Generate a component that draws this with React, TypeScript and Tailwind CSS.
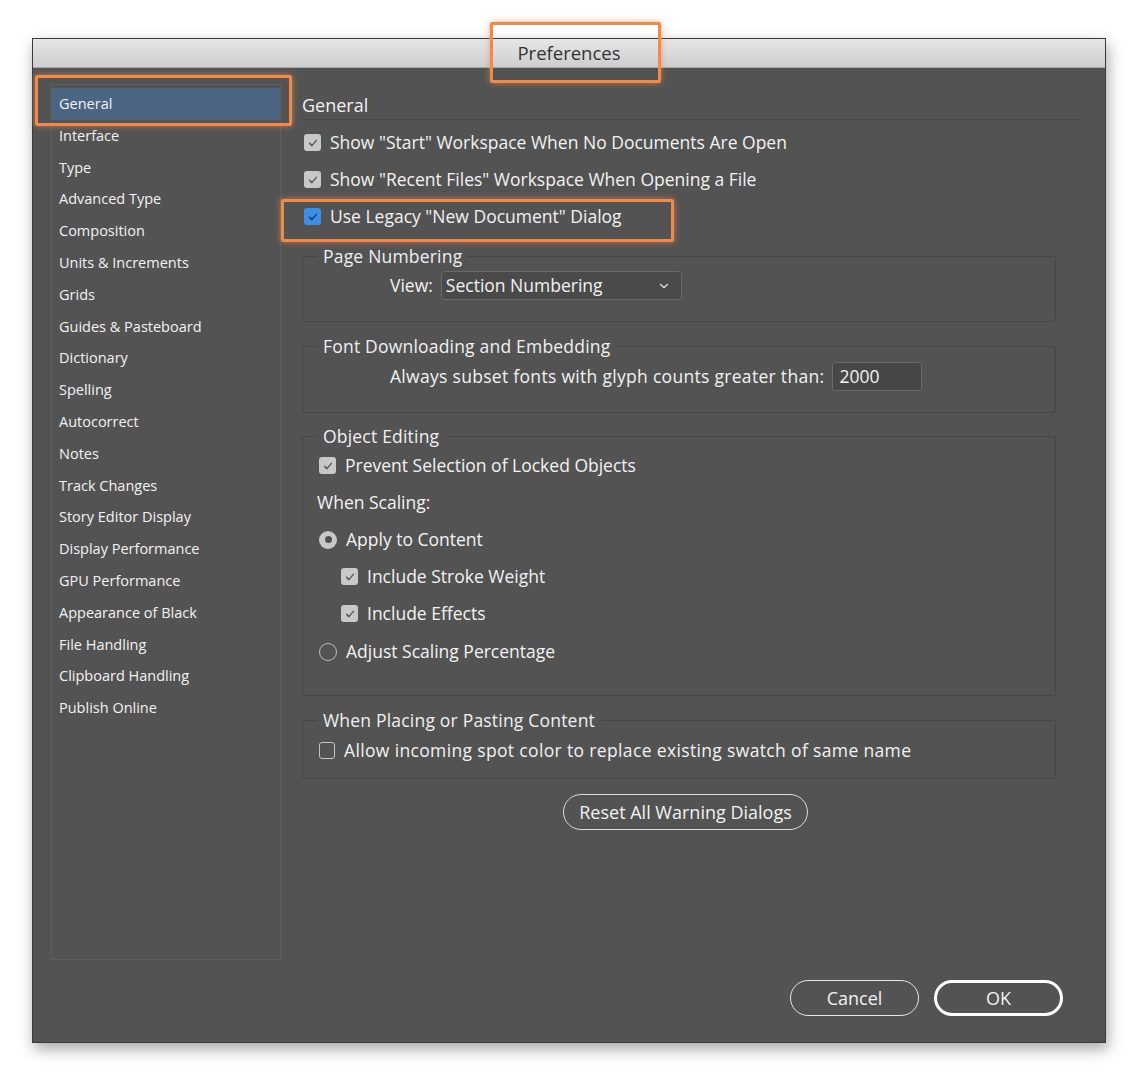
import React from "react";
import { ChevronDown } from "lucide-react";

const sections = [
  "General",
  "Interface",
  "Type",
  "Advanced Type",
  "Composition",
  "Units & Increments",
  "Grids",
  "Guides & Pasteboard",
  "Dictionary",
  "Spelling",
  "Autocorrect",
  "Notes",
  "Track Changes",
  "Story Editor Display",
  "Display Performance",
  "GPU Performance",
  "Appearance of Black",
  "File Handling",
  "Clipboard Handling",
  "Publish Online",
];

const CheckMark: React.FC<{ color: string }> = ({ color }) => (
  <svg viewBox="0 0 16 16" className="h-[12px] w-[12px]">
    <path d="M3.5 8.5l3 3 6-7" fill="none" stroke={color} strokeWidth="2" strokeLinecap="round" strokeLinejoin="round" />
  </svg>
);

const Checkbox: React.FC<{ state: "on" | "off" | "blue" }> = ({ state }) => {
  if (state === "off") {
    return <span className="h-[17px] w-[16px] shrink-0 rounded-[3px] border border-[#c4c4c4]" />;
  }
  return (
    <span
      className={`flex h-[17px] w-[17px] shrink-0 items-center justify-center rounded-[3px] ${
        state === "blue" ? "bg-[#3d8eea]" : "bg-[#c8c8c8]"
      }`}
    >
      <CheckMark color={state === "blue" ? "#1c3b63" : "#5a5a5a"} />
    </span>
  );
};

const Radio: React.FC<{ checked: boolean }> = ({ checked }) =>
  checked ? (
    <span className="flex h-[18px] w-[18px] shrink-0 items-center justify-center rounded-full bg-[#c8c8c8]">
      <span className="h-[7px] w-[7px] rounded-full bg-[#505050]" />
    </span>
  ) : (
    <span className="h-[18px] w-[18px] shrink-0 rounded-full border-[1.5px] border-[#bdbdbd]" />
  );

const Group: React.FC<{ title: string; className?: string; children: React.ReactNode }> = ({
  title,
  className = "",
  children,
}) => (
  <fieldset className={`w-[754px] rounded-[3px] border border-[#464646] ${className}`}>
    <legend className="ml-[14px] px-[6px] leading-[22px] tracking-[0.2px] text-[#f0f0f0]">{title}</legend>
    {children}
  </fieldset>
);

const PillButton: React.FC<{ label: string; className?: string }> = ({ label, className = "" }) => (
  <button className={`h-[36px] rounded-full text-[18px] font-medium text-[#f2f2f2] ${className}`}>{label}</button>
);

const Annotation: React.FC<{ className: string }> = ({ className }) => (
  <div
    className={`pointer-events-none absolute rounded-[2px] border-[3px] border-[#ef8a4c] shadow-[0_0_6px_rgba(239,138,76,0.7)] ${className}`}
  />
);

export default function App() {
  return (
    <div className="relative min-h-[1080px] w-[1138px] overflow-hidden bg-white pt-[38px] pl-[32px] font-['Open_Sans',sans-serif]">
      <div className="w-[1074px] border border-[#3a3a3a] shadow-[2px_6px_14px_rgba(0,0,0,0.35)]">
        {/* title bar */}
        <div className="flex h-[29px] items-center justify-center border-b border-[#a8a8a8] bg-gradient-to-b from-[#e7e6e7] to-[#cfcecf]">
          <span className="text-[18.5px] text-[#333]">Preferences</span>
        </div>

        {/* body */}
        <div className="flex h-[974px] flex-col bg-[#535353] pt-[16px]">
          <div className="flex">
            <ul className="ml-[18px] h-[876px] w-[230px] border border-[#5f5f5f] pt-[3px]">
              {sections.map((s, i) => (
                <li
                  key={s}
                  className={`flex h-[31.8px] items-center pl-[7px] text-[14.5px] font-medium text-[#f2f2f2] ${
                    i === 0 ? "bg-[#4a6482]" : ""
                  }`}
                >
                  {s}
                </li>
              ))}
            </ul>

            <div className="ml-[21px] mt-[9px] w-[778px] text-[17.5px] font-medium text-[#f2f2f2]">
              <div className="h-[27px] border-b border-[#474747] text-[18px] leading-[24px]">General</div>

              <div className="mt-[4px]">
                {[
                  { label: 'Show "Start" Workspace When No Documents Are Open', state: "on" as const },
                  { label: 'Show "Recent Files" Workspace When Opening a File', state: "on" as const },
                  { label: 'Use Legacy "New Document" Dialog', state: "blue" as const },
                ].map((r) => (
                  <div key={r.label} className="flex h-[37px] items-center gap-[9px] pl-[2px]">
                    <Checkbox state={r.state} />
                    <span>{r.label}</span>
                  </div>
                ))}
              </div>

              <Group title="Page Numbering" className="mt-[10px] pb-[21px]">
                <div className="flex items-center gap-[8px] pl-[87px] pt-[4px]">
                  <span>View:</span>
                  <div className="flex h-[29px] w-[241px] items-center justify-between rounded-[4px] border border-[#6a6a6a] bg-[#4a4a4a] pl-[4px] pr-[10px]">
                    <span>Section Numbering</span>
                    <ChevronDown size={14} strokeWidth={2} className="text-[#e0e0e0]" />
                  </div>
                </div>
              </Group>

              <Group title="Font Downloading and Embedding" className="mt-[13px] pb-[21px]">
                <div className="flex items-center gap-[8px] pl-[87px] pt-[5px]">
                  <span className="tracking-[0.3px]">Always subset fonts with glyph counts greater than:</span>
                  <div className="flex h-[29px] w-[90px] items-center rounded-[3px] border border-[#6a6a6a] bg-[#474747] pl-[6px]">
                    2000
                  </div>
                </div>
              </Group>

              <Group title="Object Editing" className="mt-[12px] pb-[24px]">
                <div className="pl-[14px]">
                  <div className="flex h-[37px] items-center gap-[9px] pl-[2px]">
                    <Checkbox state="on" />
                    <span>Prevent Selection of Locked Objects</span>
                  </div>
                  <div className="flex h-[37px] items-center">When Scaling:</div>
                  <div className="flex h-[37px] items-center gap-[9px] pl-[2px]">
                    <Radio checked />
                    <span>Apply to Content</span>
                  </div>
                  <div className="flex h-[37px] items-center gap-[9px] pl-[24px]">
                    <Checkbox state="on" />
                    <span>Include Stroke Weight</span>
                  </div>
                  <div className="flex h-[37px] items-center gap-[9px] pl-[24px]">
                    <Checkbox state="on" />
                    <span>Include Effects</span>
                  </div>
                  <div className="flex h-[39px] items-center gap-[9px] pl-[2px]">
                    <Radio checked={false} />
                    <span>Adjust Scaling Percentage</span>
                  </div>
                </div>
              </Group>

              <Group title="When Placing or Pasting Content" className="mt-[13px] pb-[9px]">
                <div className="flex h-[38px] items-center gap-[9px] pl-[16px]">
                  <Checkbox state="off" />
                  <span className="tracking-[0.35px]">Allow incoming spot color to replace existing swatch of same name</span>
                </div>
              </Group>

              <PillButton
                label="Reset All Warning Dialogs"
                className="ml-[261px] mt-[15px] w-[245px] border-[1.5px] border-[#dcdcdc]"
              />
            </div>
          </div>

          <div className="mt-[20px] flex justify-end gap-[15px] pr-[42px]">
            <PillButton label="Cancel" className="w-[129px] border-[1.5px] border-[#e6e6e6]" />
            <PillButton label="OK" className="w-[129px] border-[3px] border-white" />
          </div>
        </div>
      </div>

      <Annotation className="left-[35px] top-[75px] h-[51px] w-[257px]" />
      <Annotation className="left-[490px] top-[22px] h-[61px] w-[171px]" />
      <Annotation className="left-[281px] top-[199px] h-[43px] w-[393px]" />
    </div>
  );
}
